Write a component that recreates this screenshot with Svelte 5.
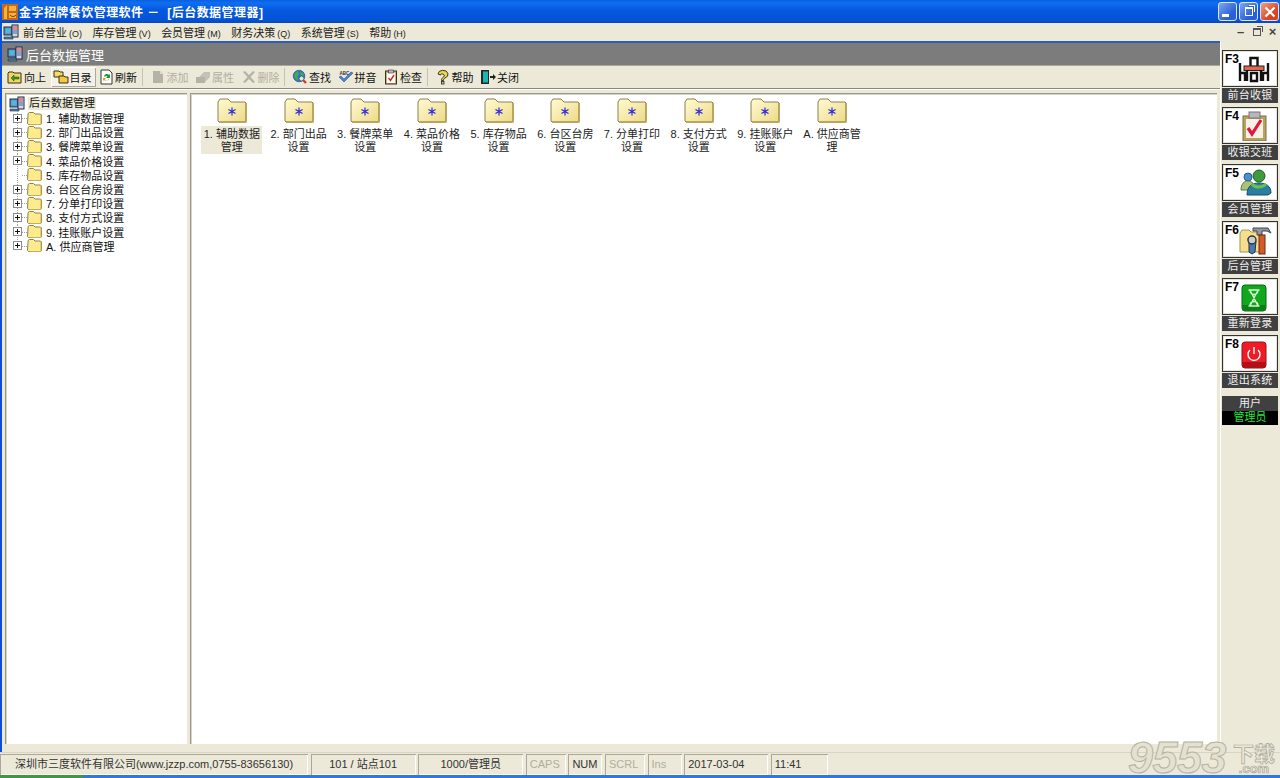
<script>
  const menus = [['前台营业', '(O)'], ['库存管理', '(V)'], ['会员管理', '(M)'], ['财务决策', '(Q)'], ['系统管理', '(S)'], ['帮助', '(H)']];
  const tools = [
    [['up', '向上'], ['dir', '目录', 'on'], ['refresh', '刷新']],
    [['add', '添加', 'off'], ['prop', '属性', 'off'], ['del', '删除', 'off']],
    [['find', '查找'], ['spell', '拼音'], ['check', '检查']],
    [['help', '帮助'], ['close', '关闭']]
  ];
  const tree = [
    ['1. 辅助数据管理', true], ['2. 部门出品设置', true], ['3. 餐牌菜单设置', true], ['4. 菜品价格设置', true],
    ['5. 库存物品设置', false], ['6. 台区台房设置', true], ['7. 分单打印设置', true], ['8. 支付方式设置', true],
    ['9. 挂账账户设置', true], ['A. 供应商管理', true]
  ];
  const folders = [
    ['1. 辅助数据', '管理'], ['2. 部门出品', '设置'], ['3. 餐牌菜单', '设置'], ['4. 菜品价格', '设置'], ['5. 库存物品', '设置'],
    ['6. 台区台房', '设置'], ['7. 分单打印', '设置'], ['8. 支付方式', '设置'], ['9. 挂账账户', '设置'], ['A. 供应商管', '理']
  ];
  const side = [['F3', '前台收银', 'table'], ['F4', '收银交班', 'clip'], ['F5', '会员管理', 'people'], ['F6', '后台管理', 'tools'], ['F7', '重新登录', 'hour'], ['F8', '退出系统', 'power']];
  const status = [
    ['深圳市三度软件有限公司(www.jzzp.com,0755-83656130)', 308, 'c'], ['101 / 站点101', 105, 'c'], ['1000/管理员', 105, 'c'],
    ['CAPS', 40, 'off'], ['NUM', 34, ''], ['SCRL', 40, 'off'], ['Ins', 34, 'off'], ['2017-03-04', 84, ''], ['11:41', 57, '']
  ];
</script>

{#snippet pcs()}
  <svg class="ic" viewBox="0 0 16 16" width="16" height="16">
    <rect x="1" y="3" width="8" height="8" fill="#6d8fc4" stroke="#1c2a4a"/>
    <rect x="2.500" y="4.500" width="5" height="4.500" fill="#3fc0d8"/>
    <rect x="9" y="1" width="6" height="12" fill="#d6d6e0" stroke="#1c2a4a"/>
    <path d="M10 3h4M10 5h4" stroke="#e04040"/><path d="M10 7h4M10 9h4" stroke="#3a6ab0"/>
    <path d="M1 13h9v2H1z" fill="#4c8a9a" stroke="#1c2a4a" stroke-width=".6"/>
  </svg>
{/snippet}

{#snippet treeFolder()}
  <svg class="tf" viewBox="0 0 15 13" width="15" height="13">
    <path d="M1 3V1.500L2.500 .5h4L8 2h5.500l1 1v8.500l-1 1h-12l-1-1z" fill="#fdeb8e" stroke="#8a8250"/>
    <path d="M14 3v9.500H2.500" stroke="#c9ae52" fill="none"/>
  </svg>
{/snippet}

{#snippet tool(k)}
  <svg class="ic" viewBox="0 0 16 16" width="16" height="16">
    {#if k === 'up'}
      <path d="M1 4l1-1h4l1 1h7v10H1z" fill="#f4d65a" stroke="#332"/><path d="M4 9l3-3v2h5v2H7v2z" fill="#3a9a2a" stroke="#143"  stroke-width=".5"/>
    {:else if k === 'dir'}
      <path d="M1 2h5l1 1h3v5H1z" fill="#f6dc62" stroke="#332"/><path d="M6 7h5l1 1h3v6H6z" fill="#f6c93a" stroke="#332"/>
    {:else if k === 'refresh'}
      <path d="M3 1h8l3 3v11H3z" fill="#fff" stroke="#334"/><path d="M6 7a3 3 0 0 1 5-1l1-1v4H8l1.500-1.500A1.500 1.500 0 0 0 7 8z" fill="#1d9a2c"/><path d="M11 10a3 3 0 0 1-5 1l-1 1V9h3l-1 1.500A1.500 1.500 0 0 0 10 10z" fill="#e5a11c"/>
    {:else if k === 'add'}
      <path d="M3 2h7l3 3v9H3z" fill="#b5b3a6"/><path d="M10 2v3h3" fill="#e0dccc"/>
    {:else if k === 'prop'}
      <path d="M1 8h9v6H1z" fill="#b5b3a6"/><path d="M4 8l5-5h6v5l-5 5V8z" fill="#c4c2b5"/>
    {:else if k === 'del'}
      <path d="M2 3l2-1 4 4 4-4 2 1-4.500 5L14 13l-2 1-4-4-4 4-2-1 4.500-5z" fill="#b5b3a6"/>
    {:else if k === 'find'}
      <circle cx="7" cy="7" r="5.800" fill="#3276c8" stroke="#1b3f7c" stroke-width=".6"/><path d="M3 4l3-2 1 3-2 3 2 3-2 0-3-3zM8 3l3 1 1 3-3 0z" fill="#3fae48"/><path d="M10 10l4 4" stroke="#d23a2a" stroke-width="2.400"/><circle cx="9.500" cy="9.500" r="2.500" fill="#cfeaf6" stroke="#333" stroke-width=".7"/>
    {:else if k === 'spell'}
      <text class="abc" x="1.500" y="5.500">ABC</text><path d="M1 8l5 5 9-9-2-1-7 7-3-3z" fill="#4a86d8" stroke="#1d3f80" stroke-width=".5"/>
    {:else if k === 'check'}
      <rect x="2.500" y="2" width="11" height="13" fill="#d4b36a" stroke="#332"/><rect x="4" y="4" width="8" height="10" fill="#fff"/><rect x="5.500" y="1" width="5" height="3" fill="#bbb" stroke="#333" stroke-width=".6"/><path d="M5.500 9l2 2.500L11 6" stroke="#d2232a" stroke-width="1.400" fill="none"/>
    {:else if k === 'help'}
      <path d="M3 5a5 4 0 1 1 7 4c-1 .6-1.500 1.200-1.500 2.500H6.500c0-2 1-3 2-3.500 1.500-1 .8-3-1-3S5.500 5 5.500 6z" fill="#f0d848" stroke="#222" stroke-width=".9"/><rect x="6.500" y="12.500" width="2.500" height="2.500" fill="#f0d848" stroke="#222" stroke-width=".8"/>
    {:else}
      <rect x="1" y="1" width="8" height="14" fill="#1f2a2a"/><rect x="3" y="2.500" width="5" height="11" fill="#19b6b0"/><path d="M10 7h3V5l3 3-3 3V9h-3z" fill="#222"/>
    {/if}
  </svg>
{/snippet}

{#snippet sideIcon(k)}
  <svg class="side-ic" viewBox="0 0 36 30" width="36" height="30">
    {#if k === 'table'}
      <path d="M14.500 4h7v9h-7z" fill="none" stroke="#111" stroke-width="2.400"/>
      <rect x="8" y="12" width="20" height="4.500" fill="#e0674e" stroke="#222"/>
      <path d="M11 16v11M25 16v11" stroke="#111" stroke-width="2.400"/>
      <path d="M4 9v18M4 19h5v8M32 9v18M32 19h-5v8M15 19v8h6v-8z" fill="none" stroke="#111" stroke-width="2.400"/>
    {:else if k === 'clip'}
      <rect x="7" y="5" width="23" height="25" fill="#b6a35c" stroke="#7b7140"/>
      <rect x="10" y="8" width="17" height="19" fill="#f6f0e6"/>
      <rect x="13" y="1" width="11" height="6" fill="#b7b7bd" stroke="#777"/>
      <path d="M12 17l4 6 9-14" stroke="#e0173c" stroke-width="3.200" fill="none"/>
    {:else if k === 'people'}
      <circle cx="12" cy="9" r="4" fill="#4b8fd2" stroke="#2a5d96"/>
      <path d="M5 22c0-6 3-9 7-9s6 2 6 9z" fill="#a9c47a" stroke="#5a7a48"/>
      <circle cx="23" cy="8" r="6" fill="#3f9a3a" stroke="#1e5c2a"/>
      <path d="M11 27c0-9 5-12 12-12s12 3 12 10l-3 2z" fill="#2a7ea0" stroke="#14506a"/>
      <path d="M16 16c3 4 10 4 14 0" stroke="#6fc04a" stroke-width="3" fill="none"/>
    {:else if k === 'tools'}
      <path d="M4 8l2-3h7l2 2h9v20H4z" fill="#f5de8c" stroke="#a8954e"/>
      <path d="M17 3h15l3 5-4-2h-5v4h-5V6h-4z" fill="#8e98a6" stroke="#444"/>
      <rect x="23" y="10" width="6" height="19" fill="#d45a28" stroke="#6d2b10"/>
      <path d="M12 13l8 3-1 11-3 2-3-2v-8z" fill="#4a7bb0" stroke="#234"/>
      <circle cx="16" cy="15" r="4" fill="#c9ced6" stroke="#333" stroke-width="1.400"/>
    {:else if k === 'hour'}
      <rect x="6" y="3" width="24" height="26" rx="3" fill="#12a81e" stroke="#0b6614"/>
      <path d="M6 23h24v3a3 3 0 0 1-3 3H9a3 3 0 0 1-3-3z" fill="#0a8015"/>
      <path d="M12.500 8h11M12.500 24h11M14 8c0 6 8 6 8 0M14 24c0-6 8-6 8 0M14.500 9l7 14M21.500 9l-7 14" stroke="#d8f5d0" stroke-width="1.300" fill="none"/>
    {:else}
      <rect x="6" y="3" width="24" height="26" rx="3" fill="#ee1c25" stroke="#981016"/>
      <path d="M6 23h24v3a3 3 0 0 1-3 3H9a3 3 0 0 1-3-3z" fill="#b30f16"/>
      <path d="M14 11a6 6 0 1 0 8 0" stroke="#fff" stroke-width="1.400" fill="none"/><path d="M18 8v7" stroke="#fff" stroke-width="1.400"/>
    {/if}
  </svg>
{/snippet}

<div class="app">
  <header class="title">
    <svg class="logo" viewBox="0 0 16 16" width="16" height="16">
      <rect width="16" height="16" fill="#c8661a"/><path d="M2 4l3-3v14H2zM7 2h7v5H7zM7 9h7v5H7z" fill="#f3b43a"/><path d="M8 11c2 2 4 2 6 0" stroke="#6a2d08" fill="none"/>
    </svg>
    <span class="title-text">金字招牌餐饮管理软件 － &nbsp;[后台数据管理器]</span>
    <div class="win">
      <button class="wb" aria-label="min"><span class="min"></span></button>
      <button class="wb" aria-label="restore"><span class="rest"></span></button>
      <button class="wb red" aria-label="close"><svg viewBox="0 0 12 12" width="12" height="12"><path d="M1.500 1.500l9 9M10.500 1.500l-9 9" stroke="#fff" stroke-width="2.200"/></svg></button>
    </div>
  </header>

  <div class="body">
    <div class="work">
      <nav class="menu">
        {@render pcs()}
        {#each menus as [m, h]}<span class="mi">{m} <small>{h}</small></span>{/each}
        <div class="mdi">
          <span class="mb">–</span>
          <span class="mb"><i class="mini"></i></span>
          <span class="mb">×</span>
        </div>
      </nav>

      <section class="child">
        <div class="caption">
          {@render pcs()}
          <span>后台数据管理</span>
        </div>
        <div class="toolbar">
          {#each tools as group, g}
            {#if g > 0}<i class="sep"></i>{/if}
            {#each group as t}
              <span class="tb {t[2] ?? ''}">{@render tool(t[0])}<b>{t[1]}</b></span>
            {/each}
          {/each}
        </div>
        <div class="panes">
          <aside class="tree">
            <div class="root">{@render pcs()}<span>后台数据管理</span></div>
            {#each tree as [label, kids], i}
              <div class="node" class:last={i === tree.length - 1}>
                {#if kids}<i class="plus"></i>{:else}<i class="line"></i>{/if}
                {@render treeFolder()}
                <span>{label}</span>
              </div>
            {/each}
          </aside>
          <main class="list">
            {#each folders as [a, b], i}
              <div class="item">
                <svg viewBox="0 0 30 25" width="30" height="25">
                  <defs><linearGradient id="fg{i}" x1="0" y1="0" x2="1" y2="1"><stop offset="0" stop-color="#fffbd0"/><stop offset="1" stop-color="#eed98a"/></linearGradient></defs>
                  <path d="M1 23V4l2-3h8l3 3h14l1 1v18l-1 1H2z" fill="url(#fg{i})" stroke="#8a8250"/>
                  <path d="M29 5v19H2" stroke="#b8a050" stroke-width="1.500" fill="none"/>
                  <path d="M15 9.500v8M11.500 11.500l7 4M18.500 11.500l-7 4" stroke="#2a2ad8" stroke-width="1.200"/>
                </svg>
                <div class="cap" class:sel={i === 0}>{a}<br />{b}</div>
              </div>
            {/each}
          </main>
        </div>
      </section>
    </div>

    <aside class="side">
      {#each side as [key, label, icon]}
        <div class="sbtn">
          <div class="sbox"><b>{key}</b>{@render sideIcon(icon)}</div>
          <div class="slabel">{label}</div>
        </div>
      {/each}
      <div class="user">用户</div>
      <div class="admin">管理员</div>
    </aside>
  </div>

  <footer class="status">
    {#each status as [text, w, cls]}
      <span class="cell {cls}" style="width:{w}px">{text}</span>
    {/each}
  </footer>
  <div class="task"><i></i></div>

  <div class="mark"><span class="n">9553</span><span class="dl">下载<small>.com</small></span></div>
</div>

<style>
  :global(body) { margin: 0; background: #ece9d8; }
  .app {
    position: relative; width: 1280px; height: 778px; overflow: hidden; display: flex; flex-direction: column;
    background: #ece9d8; color: #111;
    font: 11px "Liberation Sans", "Noto Sans CJK SC", sans-serif;
  }
  .ic { flex: none; display: block; }
  .title {
    height: 23px; flex: none; display: flex; align-items: center; padding-left: 2px;
    background: linear-gradient(#0a5fe0 0, #0f6ef0 3px, #0558e0 10px, #0552d6 20px, #0449c0 23px);
  }
  .logo { flex: none; }
  .title-text { margin-left: 1px; color: #fff; font-size: 12px; font-weight: 700; letter-spacing: .45px; white-space: pre; }
  .win { margin-left: auto; display: flex; gap: 2px; padding-right: 1px; }
  .wb {
    width: 19px; height: 19px; padding: 0; border: 1px solid #dbe6fb; border-radius: 3px; display: flex; align-items: center; justify-content: center;
    background: linear-gradient(135deg, #7fa6f0, #2a5fd8 70%);
  }
  .wb.red { background: linear-gradient(135deg, #f0a080, #d8431e 70%); }
  .min { width: 7px; height: 3px; background: #fff; align-self: flex-end; margin: 0 5px 3px 0; }
  .rest { width: 6px; height: 6px; border: 1px solid #fff; border-top-width: 2px; box-shadow: 2px -2px 0 -1px #2a5fd8, 3px -3px 0 -1px #fff; }

  .body { flex: 1; min-height: 0; display: flex; }
  .work { flex: 1; min-width: 0; display: flex; flex-direction: column; border-left: 2px solid #0a50d8; }
  .menu { height: 18px; flex: none; box-sizing: border-box; padding: 0 0 1px 1px; display: flex; align-items: center; gap: 10.500px; margin-right: -60px; position: relative; z-index: 1; background: #ece9d8; }
  .menu .ic { margin-right: -6.500px; }
  .mi { color: #222; white-space: nowrap; }
  .mi small { font-size: 9px; margin-left: -1px; }
  .mdi { margin-left: auto; display: flex; gap: 3px; padding-right: 1px; }
  .mb { width: 13px; height: 13px; color: #444; font-size: 13px; line-height: 13px; font-weight: 700; text-align: center; display: flex; align-items: center; justify-content: center; }
  .mini { width: 6px; height: 5px; border: 1px solid #555; border-top-width: 2px; box-shadow: 2px -2px 0 -1px #ece9d8, 3px -3px 0 -1px #555; }

  .child { flex: 1; min-height: 0; display: flex; flex-direction: column; border-top: 2px solid #2f5fb0; }
  .caption {
    height: 23px; flex: none; display: flex; align-items: center; gap: 3px; padding-left: 5px; box-sizing: border-box;
    background: #7c7c7c; color: #fff; font-size: 13px; border-bottom: 1px solid #a8a8a0;
  }
  .toolbar { height: 22px; flex: none; display: flex; align-items: center; padding-left: 3px; border-bottom: 1px solid #8a887c; box-shadow: 0 1px 0 #fff; }
  .tb { width: 45.500px; height: 20px; box-sizing: border-box; display: flex; align-items: center; gap: 1px; padding-left: 2px; }
  .tb b { font-weight: 400; font-size: 11px; white-space: nowrap; }
  .tb.on { background: #f4f2e8; box-shadow: inset 1px 1px 0 #fff, inset -1px -1px 0 #aca899; }
  .tb.off b { color: #b0ae9f; }
  .sep { width: 1px; height: 18px; background: #c5c2b0; margin: 0 5px 0 0; }

  .panes { flex: 1; min-height: 0; display: flex; gap: 3px; padding: 4px 3px 8px 3px; }
  .tree, .list { background: #fff; box-shadow: inset 1px 1px 0 #9a988c, inset 2px 2px 0 #d8d5c4; }
  .tree { width: 182px; flex: none; box-sizing: border-box; padding: 3px 0 0 4px; }
  .root { height: 15px; display: flex; align-items: center; gap: 3px; }
  .root span { background: #ece9d8; padding: 0 1px; height: 13px; line-height: 13px; }
  .node { height: 14.200px; display: flex; align-items: center; position: relative; padding-left: 4px; white-space: nowrap; }
  .node::before {
    content: ""; position: absolute; left: 8px; top: 0; bottom: 0; width: 1px;
    background: repeating-linear-gradient(#a0a0a0 0 1px, transparent 1px 2px);
  }
  .node.last::before { bottom: 50%; }
  .node::after {
    content: ""; position: absolute; left: 13px; top: 50%; width: 5px; height: 1px;
    background: repeating-linear-gradient(90deg, #a0a0a0 0 1px, transparent 1px 2px);
  }
  .node span { margin-left: 4px; }
  .plus {
    width: 9px; height: 9px; box-sizing: border-box; border: 1px solid #8c8c8c; flex: none; margin-right: 5px; position: relative; z-index: 1;
    background: linear-gradient(#111, #111) center / 5px 1px no-repeat, linear-gradient(#111, #111) center / 1px 5px no-repeat, #fff;
  }
  .line { width: 9px; height: 1px; flex: none; margin-right: 5px; }
  .tf { flex: none; }

  .list { flex: 1; min-width: 0; display: flex; align-items: flex-start; align-content: flex-start; padding: 5px 0 0 8.500px; box-sizing: border-box; }
  .item { width: 66.700px; flex: none; display: flex; flex-direction: column; align-items: center; }
  .cap { margin-top: 3px; padding-top: 2px; box-sizing: border-box; width: 61px; height: 28px; line-height: 13px; text-align: center; white-space: nowrap; color: #222; }
  .cap.sel { background: #ece9d8; }

  .side { width: 60px; flex: none; box-sizing: border-box; padding: 27px 2px 0 2px; display: flex; flex-direction: column; box-shadow: inset 1px 0 0 #fff; }
  .sbtn { height: 57px; }
  .sbox {
    height: 37px; box-sizing: border-box; background: #fff; border: 1px solid #333; position: relative;
    box-shadow: inset 0 0 0 1px #e5e3d8;
  }
  .sbox b { position: absolute; left: 2px; top: 1px; font-size: 12px; color: #000; }
  .side-ic { position: absolute; right: 5px; bottom: 2px; }
  .slabel { height: 15px; margin-top: 1px; background: #404040; color: #eee; text-align: center; line-height: 15px; letter-spacing: .2px; }
  .user { height: 15px; margin-top: 4px; background: #404040; color: #eee; text-align: center; line-height: 15px; }
  .admin { height: 14px; background: #000; color: #22e83a; text-align: center; line-height: 13px; }

  .status { height: 23px; flex: none; display: flex; gap: 2.600px; box-sizing: border-box; padding-top: 1px; align-items: stretch; border-top: 1px solid #d8d5c4; }
  .cell {
    box-sizing: border-box; line-height: 21px; padding-left: 4px; white-space: nowrap; color: #333;
    box-shadow: inset 1px 1px 0 #aca899, inset -1px -1px 0 #fff;
  }
  .cell.c { text-align: center; padding: 0; }
  .cell.off { color: #b0ae9f; }
  .task { height: 3px; flex: none; display: flex; background: #2f78e0; }
  .task i { width: 83px; background: #3c9a3c; }

  .mark { position: absolute; right: 5px; bottom: 0; display: flex; align-items: flex-end; gap: 7px; pointer-events: none; }
  .n {
    font: italic 700 45px/40px "Liberation Sans", sans-serif; color: #e4e1d0; -webkit-text-stroke: 1px #b5b3a4; letter-spacing: -.5px;
  }
  .dl {
    display: flex; flex-direction: column; align-items: center; padding-bottom: 4px; font-size: 21px; line-height: 21px; font-weight: 700; color: #ece9d8;
    -webkit-text-stroke: .7px #a8a698;
  }
  .dl small { font-size: 13px; line-height: 10px; }
  .abc { font: 700 4.500px "Liberation Sans", sans-serif; fill: #333; }
</style>
